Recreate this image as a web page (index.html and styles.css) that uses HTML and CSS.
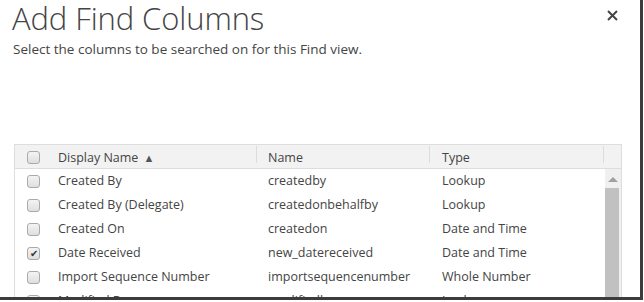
FILE: index.html
```html
<!DOCTYPE html>
<html lang="en">
<head>
  <meta charset="UTF-8"/>
  <title>Add Find Columns</title>
  <link rel="stylesheet" href="styles.css">
</head>
<body>
  <div class="frame">

    <!-- Title bar -->
    <div class="title-bar">
      <h1>Add Find Columns</h1>
      <button class="close-btn" aria-label="Close">
        <svg width="11" height="11" viewBox="0 0 11 11"><path d="M1 1L10 10M10 1L1 10" stroke="#444" stroke-width="2"/></svg>
      </button>
    </div>
    <p class="subtitle">Select the columns to be searched on for this Find view.</p>

    <!-- Columns grid -->
    <div class="grid">
      <div class="grid-head">
        <div class="cell col-display"><span class="chk"></span><span class="label">Display Name</span><span class="sort">&#9650;</span></div>
        <div class="cell col-name">Name</div>
        <div class="cell col-type">Type</div>
        <div class="cell col-scroll"></div>
      </div>
      <div class="grid-body">
        <div class="rows">
          <div class="row"><div class="cell col-display"><span class="chk"></span>Created By</div><div class="cell col-name">createdby</div><div class="cell col-type">Lookup</div></div>
          <div class="row"><div class="cell col-display"><span class="chk"></span>Created By (Delegate)</div><div class="cell col-name">createdonbehalfby</div><div class="cell col-type">Lookup</div></div>
          <div class="row"><div class="cell col-display"><span class="chk"></span>Created On</div><div class="cell col-name">createdon</div><div class="cell col-type">Date and Time</div></div>
          <div class="row"><div class="cell col-display"><span class="chk checked"></span>Date Received</div><div class="cell col-name">new_datereceived</div><div class="cell col-type">Date and Time</div></div>
          <div class="row"><div class="cell col-display"><span class="chk"></span>Import Sequence Number</div><div class="cell col-name">importsequencenumber</div><div class="cell col-type">Whole Number</div></div>
          <div class="row"><div class="cell col-display"><span class="chk"></span>Modified By</div><div class="cell col-name">modifiedby</div><div class="cell col-type">Lookup</div></div>
        </div>
        <div class="scrollbar">
          <div class="arrow"></div>
          <div class="thumb"></div>
        </div>
      </div>
    </div>

  </div>
</body>
</html>
```

FILE: styles.css
```css
* { margin:0; padding:0; box-sizing:border-box }
body {
  font-family:'Segoe UI','Open Sans',sans-serif;
  background:#fff;
  color:#444;
}

/* Screenshot frame */
.frame {
  width:643px; height:300px;
  border-right:3px solid #3c3c3c;
  border-bottom:3px solid #3c3c3c;
  overflow:hidden;
}

/* Title */
.title-bar {
  display:flex; justify-content:space-between; align-items:flex-start;
  padding:0 22px 0 12px;
}
.title-bar h1 {
  font-size:31px; font-weight:300; line-height:36px;
  color:#444; letter-spacing:-0.1px;
}
.close-btn {
  background:none; border:none; cursor:pointer;
  margin-top:10px; display:flex;
}
.subtitle {
  font-size:13.5px; line-height:18px;
  padding:4px 0 0 13px;
  color:#444;
}

/* Grid */
.grid {
  width:608px; margin:86px 0 0 14px;
  border:1px solid #ddd; border-bottom:none;
  font-size:12.5px;
}
.grid-head {
  display:flex; height:24px;
  background:#f2f2f2;
  border-bottom:1px solid #ddd;
}
.grid-head .cell {
  height:17px; margin-top:1px;
  line-height:23px;
  border-right:1px solid #dcdcdc;
}
.grid-head .col-scroll { border-right:none }
.cell { white-space:nowrap; display:flex; align-items:center }
.col-display { width:242px; padding-left:12px }
.col-name { width:173px; padding-left:11px }
.col-type { width:174px; padding-left:12px }
.col-scroll { width:17px }
.grid-head .col-display { align-items:flex-start; padding-top:5px }
.grid-head .col-display .label { line-height:13px }
.sort { font-size:11px; margin-left:5px; line-height:13px; color:#555 }
.grid-head .col-name, .grid-head .col-type { align-items:flex-start }

.grid-body { display:flex }
.rows { width:589px }
.row { display:flex; height:24px }
.row .cell { line-height:24px }

/* Checkboxes */
.chk {
  width:13px; height:13px; flex:none;
  border:1px solid #aaa; border-radius:3px;
  background:linear-gradient(#f4f4f4,#dedede);
  margin-right:18px;
  display:flex; align-items:center; justify-content:center;
}
.chk.checked::after {
  content:'\2714'; font-size:10px; line-height:10px; color:#333;
}

/* Scrollbar */
.scrollbar {
  width:17px; background:#f0f0f0;
  border-left:1px solid #fff;
  display:flex; flex-direction:column; align-items:center;
}
.arrow {
  width:0; height:0; margin:8px 0 6px;
  border-left:5px solid transparent; border-right:5px solid transparent;
  border-bottom:5px solid #a0a0a0;
}
.thumb {
  width:14px; height:200px; background:#c1c1c1;
  align-self:flex-start;
}
```
